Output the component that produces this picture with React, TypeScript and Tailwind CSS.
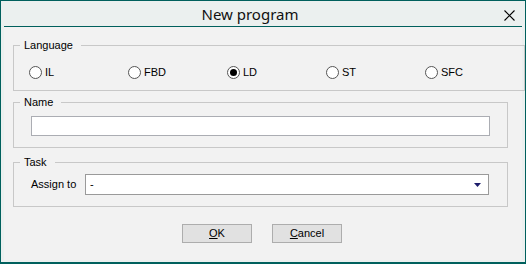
const ui = "font-['Liberation_Sans',Arial,sans-serif] text-[11px] text-black";

function Radio({ label, checked }: { label: string; checked?: boolean }) {
  return (
    <label className="flex w-[99px] items-center gap-[3px]">
      <span className="flex h-[13px] w-[13px] items-center justify-center rounded-full border border-[#555] bg-white">
        {checked && <span className="h-[7px] w-[7px] rounded-full bg-black" />}
      </span>
      <span className="leading-[13px]">{label}</span>
    </label>
  );
}

function Group({ title, className, children }: { title: string; className?: string; children: React.ReactNode }) {
  return (
    <fieldset className={`ml-[9px] mr-[14px] border border-[#c8c8c8] ${className ?? ""}`}>
      <legend className="ml-[6px] pl-[4px] pr-[8px] leading-[13px]">{title}</legend>
      {children}
    </fieldset>
  );
}

export default function App() {
  return (
    <div className={`flex h-[264px] w-[526px] flex-col border-x border-t border-b-2 border-[#00605d] bg-[#ebf0ef] ${ui}`}>
      <div className="relative flex h-[25px] shrink-0 items-center justify-center pr-[26px]">
        <span className="font-['Noto_Sans',sans-serif] text-[15px] leading-[20px] text-[#111]">New program</span>
        <svg className="absolute right-[10px] top-[9px]" width="11" height="11" viewBox="0 0 11 11">
          <path d="M0.5 0.5 L10.5 10.5 M10.5 0.5 L0.5 10.5" stroke="#000" strokeWidth="1.1" />
        </svg>
      </div>
      <div className="mx-[3px] h-px shrink-0 bg-[#00605d]" />
      <div className="mx-[3px] mb-[2px] flex flex-1 flex-col bg-[#f2f2f2]">
        <Group title="Language" className="mt-[12px]">
          <div className="mt-[14px] mb-[11px] flex pl-[15px]">
            <Radio label="IL" />
            <Radio label="FBD" />
            <Radio label="LD" checked />
            <Radio label="ST" />
            <Radio label="SFC" />
          </div>
        </Group>
        <Group title="Name" className="mt-[5px]">
          <div className="mt-[7px] mb-[11px] px-[17px]">
            <input className="block h-[20px] w-full border border-[#abadb3] bg-white outline-none" />
          </div>
        </Group>
        <Group title="Task" className="mt-[8px]">
          <div className="mt-[5px] mb-[11px] flex items-center pl-[17px] pr-[18px]">
            <span className="w-[54px]">Assign to</span>
            <div className="flex h-[21px] flex-1 items-center justify-between border border-[#9a9a9a] bg-white pl-[4px] pr-[7px]">
              <span>-</span>
              <svg width="7" height="4" viewBox="0 0 7 4">
                <path d="M0 0 H7 L3.5 4 Z" fill="#1c1c6b" />
              </svg>
            </div>
          </div>
        </Group>
        <div className="mt-[17px] flex justify-center gap-[20px] pr-[2px]">
          <button className="flex h-[19px] w-[70px] items-center justify-center border border-[#adadad] bg-[#e1e1e1]">
            <span><u>O</u>K</span>
          </button>
          <button className="flex h-[19px] w-[70px] items-center justify-center border border-[#adadad] bg-[#e1e1e1]">
            <span><u>C</u>ancel</span>
          </button>
        </div>
      </div>
    </div>
  );
}
